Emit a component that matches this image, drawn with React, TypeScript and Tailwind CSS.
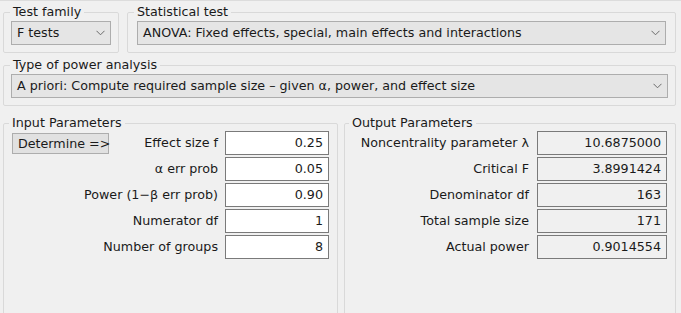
import React from 'react';

const font = { fontFamily: '"DejaVu Sans", Verdana, sans-serif' };

const Chevron = () => (
  <svg width="9" height="6" viewBox="0 0 9 6" className="shrink-0">
    <path d="M0.5 0.8 L4.5 4.8 L8.5 0.8" fill="none" stroke="#6b6b6b" strokeWidth="1" />
  </svg>
);

const Combo: React.FC<{ value: string }> = ({ value }) => (
  <div className="h-[24px] flex items-center justify-between pl-[5px] pr-[5px] bg-[#e5e5e5] border border-[#adadad] text-[12.7px] text-[#1a1a1a]">
    <span className="whitespace-nowrap">{value}</span>
    <Chevron />
  </div>
);

const Group: React.FC<{ title: string; className?: string; inner?: string; legend?: string; children: React.ReactNode }> = ({
  title,
  className,
  inner,
  legend,
  children,
}) => (
  <fieldset className={`border border-[#d9d9d9] rounded-[2px] ${className ?? ''}`}>
    <legend className={`${legend ?? 'ml-[6px]'} px-[3px] text-[12.7px] leading-[16px] text-[#1a1a1a]`}>{title}</legend>
    <div className={inner}>{children}</div>
  </fieldset>
);

const inputs = [
  { label: 'Effect size f', value: '0.25' },
  { label: 'α err prob', value: '0.05' },
  { label: 'Power (1−β err prob)', value: '0.90' },
  { label: 'Numerator df', value: '1' },
  { label: 'Number of groups', value: '8' },
];

const outputs = [
  { label: 'Noncentrality parameter λ', value: '10.6875000' },
  { label: 'Critical F', value: '3.8991424' },
  { label: 'Denominator df', value: '163' },
  { label: 'Total sample size', value: '171' },
  { label: 'Actual power', value: '0.9014554' },
];

export default function App() {
  return (
    <div style={font} className="w-[681px] h-[313px] overflow-hidden bg-[#f0f0f0] border-t border-[#dcdcdc] text-[#1a1a1a]">
      {/* Test selection */}
      <div className="flex gap-[8px] pl-[3px] pr-[5px] pt-[3px]">
        <Group title="Test family" className="w-[116px] h-[49px]" inner="px-[7px] pt-[1px]">
          <Combo value="F tests" />
        </Group>
        <Group title="Statistical test" className="flex-1 h-[49px]" inner="px-[9px] pt-[1px]">
          <Combo value="ANOVA: Fixed effects, special, main effects and interactions" />
        </Group>
      </div>

      <div className="pl-[3px] pr-[5px] pt-[4px]">
        <Group title="Type of power analysis" className="h-[49px]" inner="px-[7px] pt-[1px]">
          <Combo value="A priori: Compute required sample size – given α, power, and effect size" />
        </Group>
      </div>

      {/* Parameters */}
      <div className="flex gap-[6px] pl-[3px] pr-[5px] pt-[9px]">
        <Group title="Input Parameters" className="w-[335px] h-[230px]" legend="ml-[5px]" inner="px-[8px]">
          <div className="relative flex flex-col gap-[2px]">
            <button className="absolute left-0 top-[2px] w-[97px] h-[21px] bg-[#e1e1e1] border border-[#adadad] text-[12.7px] text-left pl-[5px] pr-0 whitespace-nowrap text-[#1a1a1a]">
              Determine =&gt;
            </button>
            {inputs.map((r) => (
              <div key={r.label} className="flex items-center justify-end gap-[7px]">
                <span className="text-[12.7px] whitespace-nowrap">{r.label}</span>
                <div className="w-[104px] h-[24px] bg-white border border-[#7a7a7a] flex items-center justify-end pr-[5px] text-[12.7px]">
                  {r.value}
                </div>
              </div>
            ))}
          </div>
        </Group>
        <Group title="Output Parameters" className="flex-1 h-[230px]" legend="ml-[4px]" inner="px-[8px]">
          <div className="flex flex-col gap-[2px]">
            {outputs.map((r) => (
              <div key={r.label} className="flex items-center justify-end gap-[8px]">
                <span className="text-[12.7px] whitespace-nowrap">{r.label}</span>
                <div className="w-[130px] h-[24px] bg-[#f0f0f0] border border-[#7a7a7a] flex items-center justify-end pr-[5px] text-[12.7px]">
                  {r.value}
                </div>
              </div>
            ))}
          </div>
        </Group>
      </div>
    </div>
  );
}
